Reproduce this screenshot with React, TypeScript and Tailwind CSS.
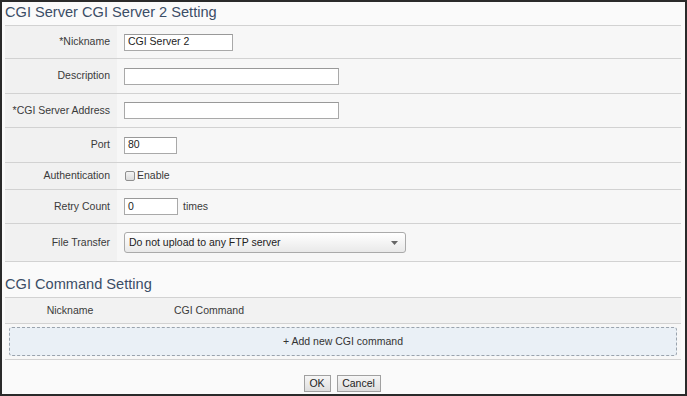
import React from "react";

const font = { fontFamily: '"Liberation Sans", Arial, sans-serif' };

function Row({
  label,
  h,
  children,
}: {
  label: string;
  h: string;
  children: React.ReactNode;
}) {
  return (
    <div className={`grid grid-cols-[112px_1fr] border-b border-[#d2d2d2] ${h}`}>
      <div className="flex items-center justify-end bg-[#f1f1f1] pr-[7px] text-[10.5px] text-[#3a3a3a]">
        {label}
      </div>
      <div className="flex items-center bg-[#f7f7f7] pl-[7px] text-[10.5px] text-[#3a3a3a]">
        {children}
      </div>
    </div>
  );
}

function Input({ w, value }: { w: string; value?: string }) {
  return (
    <div
      className={`${w} flex h-[17px] items-center border border-[#a9a9a9] border-t-[#999] bg-white pl-[3px] text-[10.5px] text-[#222]`}
    >
      {value}
    </div>
  );
}

export default function App() {
  return (
    <div
      style={font}
      className="h-[396px] w-[687px] overflow-hidden border-2 border-[#2a2a2a] bg-[#fafafa]"
    >
      <div className="ml-[3px] mr-[4px]">
        <div className="flex h-[23px] items-center pb-[2px] text-[14.6px] leading-none text-[#3b4d66]">
          CGI Server CGI Server 2 Setting
        </div>
        <div className="border-t border-[#d2d2d2]">
          <Row label="*Nickname" h="h-[33px]">
            <Input w="w-[109px]" value="CGI Server 2" />
          </Row>
          <Row label="Description" h="h-[35px]">
            <Input w="w-[215px]" />
          </Row>
          <Row label="*CGI Server Address" h="h-[34px]">
            <Input w="w-[215px]" />
          </Row>
          <Row label="Port" h="h-[35px]">
            <Input w="w-[53px]" value="80" />
          </Row>
          <Row label="Authentication" h="h-[27px]">
            <div className="flex items-center">
              <div className="ml-[1px] h-[10px] w-[10px] rounded-[2px] border border-[#8f8f8f] bg-gradient-to-b from-[#f4f4f4] to-[#dcdcdc]" />
              <span className="ml-[2px]">Enable</span>
            </div>
          </Row>
          <Row label="Retry Count" h="h-[34px]">
            <Input w="w-[54px]" value="0" />
            <span className="ml-[5px]">times</span>
          </Row>
          <Row label="File Transfer" h="h-[38px]">
            <div className="flex h-[21px] w-[282px] items-center justify-between rounded-[3px] border border-[#aaa] bg-gradient-to-b from-white to-[#e9e9e9] pl-[4px] pr-[7px] text-[10.5px] text-[#222]">
              <span>Do not upload to any FTP server</span>
              <svg width="7" height="4" viewBox="0 0 7 4">
                <path d="M0 0 L7 0 L3.5 4 Z" fill="#666" />
              </svg>
            </div>
          </Row>
        </div>

        <div className="flex h-[35px] items-end pb-[5px] text-[14.6px] leading-none text-[#3b4d66]">
          CGI Command Setting
        </div>
        <div className="flex h-[27px] items-center border-t border-b border-[#d2d2d2] bg-[#f2f2f2] text-[10.5px] text-[#3a3a3a]">
          <div className="w-[130px] text-center">Nickname</div>
          <div className="ml-[39px]">CGI Command</div>
        </div>
        <div className="flex h-[36px] items-center border-b border-[#d2d2d2] bg-[#f7f7f7] px-[4px]">
          <div className="flex h-[29px] w-full items-center justify-center rounded-[3px] border border-dashed border-[#9aa3ad] bg-[#eaf0f6] text-[10.5px] text-[#333]">
            + Add new CGI command
          </div>
        </div>
        <div className="flex justify-center gap-[6px] pt-[15px] pr-[2px]">
          <button className="h-[17px] w-[27px] border border-[#a0a0a0] bg-gradient-to-b from-[#f6f6f6] to-[#dedede] text-[10.5px] leading-none text-[#222]">
            OK
          </button>
          <button className="h-[17px] w-[44px] border border-[#a0a0a0] bg-gradient-to-b from-[#f6f6f6] to-[#dedede] text-[10.5px] leading-none text-[#222]">
            Cancel
          </button>
        </div>
      </div>
    </div>
  );
}
